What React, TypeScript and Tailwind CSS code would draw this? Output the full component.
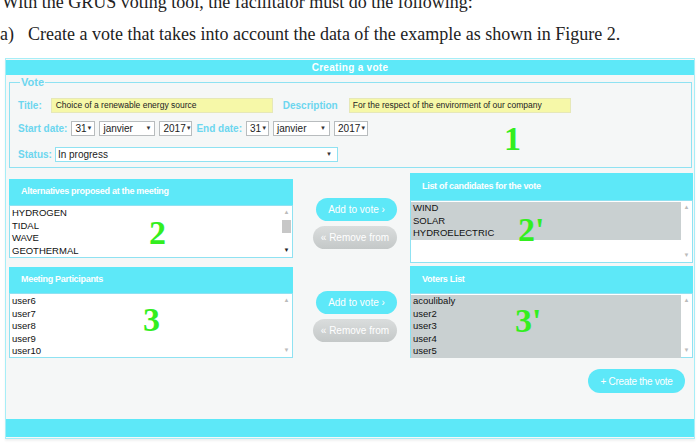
import React from "react";

const CYAN = "bg-[#5de8f8]";

function Select({ value, w }: { value: string; w: string }) {
  return (
    <div
      className={`${w} h-[15px] flex items-center justify-between border border-[#b8bcbe] bg-white px-[3px] text-[10px] text-[#222]`}
    >
      <span>{value}</span>
      <span className="text-[6px] text-[#333]">▼</span>
    </div>
  );
}

function Label({ children }: { children: React.ReactNode }) {
  return <span className="text-[10px] font-bold text-[#6cd6ef]">{children}</span>;
}

function Big({ children, className }: { children: React.ReactNode; className: string }) {
  return (
    <span
      className={`absolute font-['Liberation_Serif',serif] font-bold text-[34px] leading-none text-[#33ee1f] ${className}`}
    >
      {children}
    </span>
  );
}

function ListBox({
  items,
  h,
  selected = 0,
  thumb = false,
  num,
  numPos,
}: {
  items: string[];
  h: string;
  selected?: number;
  thumb?: boolean;
  num: string;
  numPos: string;
}) {
  return (
    <div className={`relative ${h} border border-[#8fe2f2] bg-white flex`}>
      <div className="flex-1 flex flex-col pt-[1px]">
        {items.map((it, i) => (
          <div
            key={it}
            className={`h-[12.5px] leading-[12.5px] pl-[2px] text-[9.5px] text-[#111] ${
              i < selected ? "bg-[#c9d0d1]" : ""
            }`}
          >
            {it}
          </div>
        ))}
        {selected > items.length && <div className="flex-1 bg-[#c9d0d1]" />}
      </div>
      <div className="w-[11px] flex flex-col items-center justify-between py-[2px] bg-white">
        <span className="text-[6px] text-[#bbb]">▲</span>
        {thumb && <div className="w-[9px] h-[13px] bg-[#c7c7c7] -mt-[10px]" />}
        <span className={`text-[6px] ${thumb ? "text-[#222]" : "text-[#bbb]"}`}>▼</span>
      </div>
      <Big className={numPos}>{num}</Big>
    </div>
  );
}

function Header({ title, h }: { title: string; h: string }) {
  return (
    <div className={`${h} ${CYAN} flex items-center pl-[12px]`}>
      <span className="text-[9px] font-bold text-white tracking-[-0.3px]">{title}</span>
    </div>
  );
}

function Buttons({ mt }: { mt: string }) {
  return (
    <div className={`${mt} flex flex-col items-end gap-[5px]`}>
      <div className={`w-[81px] h-[23px] rounded-full ${CYAN} flex items-center justify-center text-[10px] text-white`}>
        Add to vote ›
      </div>
      <div className="w-[84px] h-[23px] rounded-full bg-gradient-to-b from-[#dadddd] to-[#c4c8c8] flex items-center justify-center text-[10px] text-white">
        « Remove from
      </div>
    </div>
  );
}

export default function App() {
  return (
    <div className="w-[700px] h-[446px] bg-white overflow-hidden font-['Liberation_Sans',Arial,sans-serif]">
      {/* Document text */}
      <div className="h-[58px] flex flex-col font-['Liberation_Serif',serif] text-[18px] text-[#222] leading-[32px]">
        <div className="-mt-[14px] pl-[2px]">With the GRUS voting tool, the facilitator must do the following:</div>
        <div className="flex">
          <span className="w-[28px]">a)</span>
          <span>Create a vote that takes into account the data of the example as shown in Figure 2.</span>
        </div>
      </div>

      {/* App panel */}
      <div className="ml-[5px] w-[690px] h-[381px] border border-[#a6eef7] bg-[#f5f7f7] pt-[1px] flex flex-col shadow-[0_2px_2px_rgba(0,0,0,0.06)]">
        <div className={`h-[15px] ${CYAN} flex items-center justify-center`}>
          <span className="text-[10px] font-bold text-white tracking-[0.3px]">Creating a vote</span>
        </div>

        <fieldset className="relative ml-[3px] mr-[2px] mt-[1px] h-[92px] border border-[#8fe2f2] px-[8px]">
          <legend className="ml-[2px] px-[1px] text-[11px] font-bold text-[#6cd6ef] leading-[12px]">Vote</legend>
          <div className="flex items-center h-[15px] mt-[10px]">
            <Label>Title:</Label>
            <div className="ml-[9px] w-[222px] h-[15px] bg-[#f6f8a8] border border-[#e6e8b8] flex items-center pl-[4px] text-[8.5px] text-[#222]">
              Choice of a renewable energy source
            </div>
            <div className="ml-[10px] flex items-center">
              <Label>Description</Label>
            </div>
            <div className="ml-[11px] w-[222px] h-[15px] bg-[#f6f8a8] border border-[#e6e8b8] flex items-center pl-[3px] text-[8.5px] text-[#222]">
              For the respect of the envirorment of our company
            </div>
          </div>
          <div className="flex items-center gap-[4px] h-[15px] mt-[8px]">
            <Label>Start date:</Label>
            <Select value="31" w="w-[24px]" />
            <Select value="janvier" w="w-[56px]" />
            <Select value="2017" w="w-[33px]" />
            <Label>End date:</Label>
            <Select value="31" w="w-[23px]" />
            <Select value="janvier" w="w-[57px]" />
            <Select value="2017" w="w-[34px]" />
          </div>
          <div className="flex items-center gap-[3px] h-[15px] mt-[11px]">
            <Label>Status:</Label>
            <div className="w-[283px] h-[15px] flex items-center justify-between border border-[#8fe2f2] bg-white px-[2px] text-[10px] text-[#222]">
              <span>In progress</span>
              <span className="text-[6px] text-[#333] pr-[3px]">▼</span>
            </div>
          </div>
          <Big className="left-[494px] top-[34px]">1</Big>
        </fieldset>

        <div className="flex items-start ml-[3px]">
          {/* Left column */}
          <div className="w-[284px] mt-[11px] flex flex-col">
            <Header title="Alternatives proposed at the meeting" h="h-[26px]" />
            <ListBox
              items={["HYDROGEN", "TIDAL", "WAVE", "GEOTHERMAL"]}
              h="h-[53px]"
              thumb
              num="2"
              numPos="left-[139px] top-[10px]"
            />
            <div className="h-[9px]" />
            <Header title="Meeting Participants" h="h-[26px]" />
            <ListBox
              items={["user6", "user7", "user8", "user9", "user10"]}
              h="h-[65px]"
              num="3"
              numPos="left-[133px] top-[9px]"
            />
          </div>

          {/* Buttons */}
          <div className="w-[117px] pr-[13px] flex flex-col">
            <Buttons mt="mt-[30px]" />
            <Buttons mt="mt-[42px]" />
          </div>

          {/* Right column */}
          <div className="w-[283px] mt-[5px] flex flex-col">
            <Header title="List of candidates for the vote" h="h-[27px]" />
            <ListBox
              items={["WIND", "SOLAR", "HYDROELECTRIC"]}
              h="h-[63px]"
              selected={3}
              num="2'"
              numPos="left-[107px] top-[12px]"
            />
            <div className="h-[3px]" />
            <Header title="Voters List" h="h-[27px]" />
            <ListBox
              items={["acoulibaly", "user2", "user3", "user4", "user5"]}
              h="h-[65px]"
              selected={9}
              num="3'"
              numPos="left-[104px] top-[10px]"
            />
          </div>
        </div>

        <div className="flex justify-end mr-[9px] mt-[11px]">
          <div className={`w-[97px] h-[24px] rounded-full ${CYAN} flex items-center justify-center text-[10px] text-white tracking-[-0.3px]`}>
            + Create the vote
          </div>
        </div>

        <div className="flex-1" />
        <div className={`h-[18px] ${CYAN} mb-[1px]`} />
      </div>
    </div>
  );
}
